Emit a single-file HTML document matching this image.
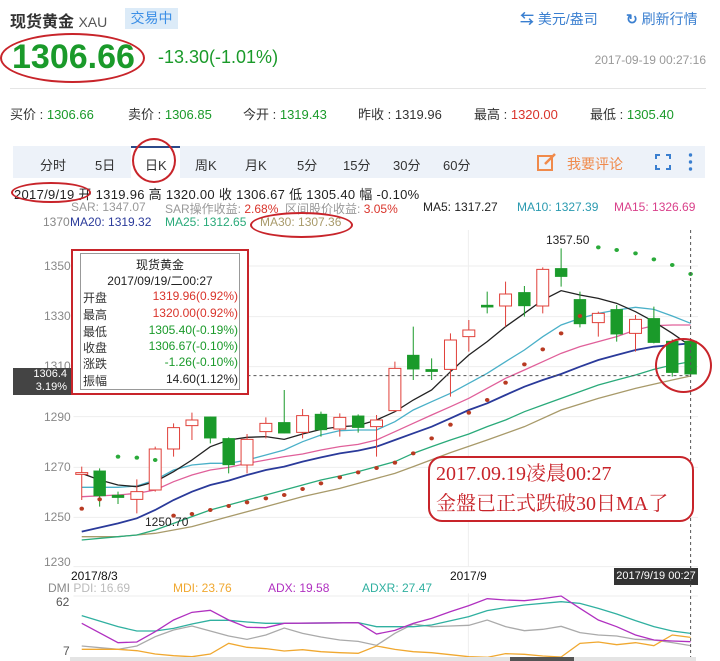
<!DOCTYPE html>
<html><head><meta charset="utf-8"><style>
*{margin:0;padding:0;box-sizing:border-box}
body{width:720px;height:661px;background:#fff;font-family:"Liberation Sans","Noto Sans CJK SC",sans-serif;position:relative;overflow:hidden;color:#333}
.a{position:absolute;white-space:nowrap}
.g{color:#1a9a2a}.r{color:#d9342b}
.tab{position:absolute;top:155px;font-size:13px;color:#333}
.ell{position:absolute;border:2px solid #c8242a;border-radius:50%}
.tt{position:absolute;left:83px;width:155px;font-size:12px}
.tt span{float:right}
</style></head><body>
<div class="a" style="left:10px;top:8px;font-size:16px;font-weight:bold;color:#333">现货黄金 <span style="font-weight:normal;color:#555;font-size:14px">XAU</span></div>
<div class="a" style="left:125px;top:8px;width:53px;height:21px;background:#dcebf8;color:#3a8ee6;font-size:14px;line-height:21px;text-align:center">交易中</div>
<div class="a" style="left:520px;top:9px;font-size:14px;color:#3a7fd0"><b>⇆</b> 美元/盎司</div>
<div class="a" style="left:626px;top:9px;font-size:14px;color:#3a7fd0"><b>↻</b> 刷新行情</div>
<div class="a" style="left:12px;top:38px;font-size:34px;font-weight:bold;color:#1a9a2a">1306.66</div>
<div class="ell" style="left:0;top:33px;width:145px;height:50px"></div>
<div class="a g" style="left:158px;top:47px;font-size:18px">-13.30(-1.01%)</div>
<div class="a" style="right:14px;top:53px;font-size:12px;color:#999">2017-09-19 00:27:16</div>
<div class="a" style="left:10px;top:88px;width:696px;height:1px;background:#e5e5e5"></div>
<div class="a" style="left:10px;top:104px;font-size:13px">买价 : <span class="g">1306.66</span></div>
<div class="a" style="left:128px;top:104px;font-size:13px">卖价 : <span class="g">1306.85</span></div>
<div class="a" style="left:243px;top:104px;font-size:13px">今开 : <span class="g">1319.43</span></div>
<div class="a" style="left:358px;top:104px;font-size:13px">昨收 : 1319.96</div>
<div class="a" style="left:474px;top:104px;font-size:13px">最高 : <span class="r">1320.00</span></div>
<div class="a" style="left:590px;top:104px;font-size:13px">最低 : <span class="g">1305.40</span></div>
<div class="a" style="left:13px;top:146px;width:692px;height:32px;background:#edf2f9"></div>
<div class="a" style="left:131px;top:146px;width:49px;height:32px;background:#fff;border-top:2px solid #2a4a8a"></div>
<div class="tab" style="left:40px">分时</div><div class="tab" style="left:95px">5日</div><div class="tab" style="left:145px">日K</div><div class="tab" style="left:195px">周K</div><div class="tab" style="left:245px">月K</div><div class="tab" style="left:297px">5分</div><div class="tab" style="left:343px">15分</div><div class="tab" style="left:393px">30分</div><div class="tab" style="left:443px">60分</div>
<div class="ell" style="left:132px;top:138px;width:44px;height:45px"></div>
<svg class="a" style="left:537px;top:153px" width="20" height="18"><rect x="1" y="3" width="14" height="14" fill="none" stroke="#f08a4b" stroke-width="2"/><path d="M8 11 L18 1" stroke="#f08a4b" stroke-width="2.5"/></svg>
<div class="a" style="left:567px;top:154px;font-size:14px;color:#f08a4b">我要评论</div>
<svg class="a" style="left:655px;top:154px" width="16" height="16" fill="none" stroke="#3a7fd0" stroke-width="2"><path d="M1 5V1H5M11 1H15V5M15 11V15H11M5 15H1V11"/></svg>
<svg class="a" style="left:688px;top:152px" width="5" height="20" fill="#3a7fd0"><circle cx="2.5" cy="3" r="1.7"/><circle cx="2.5" cy="10" r="1.7"/><circle cx="2.5" cy="17" r="1.7"/></svg>
<div class="a" style="left:14px;top:184px;font-size:13px;letter-spacing:0.3px;color:#222">2017/9/19 开 1319.96 高 1320.00 收 1306.67 低 1305.40 幅 -0.10%</div>
<div class="ell" style="left:11px;top:182px;width:80px;height:21px"></div>
<div class="a" style="left:71px;top:200px;font-size:12px;color:#999">SAR: 1347.07</div>
<div class="a" style="left:165px;top:200px;font-size:12px;color:#999">SAR操作收益: <span class="r">2.68%</span> &nbsp;区间股价收益: <span class="r">3.05%</span></div>
<div class="a" style="left:423px;top:200px;font-size:12px;color:#222">MA5: 1317.27</div>
<div class="a" style="left:517px;top:200px;font-size:12px;color:#2a9ab0">MA10: 1327.39</div>
<div class="a" style="left:614px;top:200px;font-size:12px;color:#d9408a">MA15: 1326.69</div>
<div class="a" style="left:43px;top:215px;font-size:12px;color:#888">1370</div>
<div class="a" style="left:70px;top:215px;font-size:12px;color:#2a3a9a">MA20: 1319.32</div>
<div class="a" style="left:165px;top:215px;font-size:12px;color:#2aaa7a">MA25: 1312.65</div>
<div class="a" style="left:260px;top:215px;font-size:12px;color:#a89a6a">MA30: 1307.36</div>
<div class="ell" style="left:250px;top:212px;width:103px;height:26px"></div>
<div class="a" style="left:44px;top:259px;font-size:12px;color:#888">1350</div>
<div class="a" style="left:44px;top:309px;font-size:12px;color:#888">1330</div>
<div class="a" style="left:44px;top:359px;font-size:12px;color:#888">1310</div>
<div class="a" style="left:44px;top:410px;font-size:12px;color:#888">1290</div>
<div class="a" style="left:44px;top:460px;font-size:12px;color:#888">1270</div>
<div class="a" style="left:44px;top:510px;font-size:12px;color:#888">1250</div>
<div class="a" style="left:44px;top:555px;font-size:12px;color:#888">1230</div>
<svg class="a" style="left:0;top:230px" width="720" height="340" viewBox="0 0 1568 1020" preserveAspectRatio="none">
<g stroke="#eee" vector-effect="non-scaling-stroke"><path d="M160 108H1520M160 260H1520M160 410H1520M160 560H1520M160 712H1520M160 862H1520M160 1010H1520M1020 0V1010" vector-effect="non-scaling-stroke"/></g>
<g fill="none" stroke-width="1.3">
<polyline vector-effect="non-scaling-stroke" stroke="#a89a6a" points="178,920 257,920 338,910 418,890 498,860 579,830 659,800 740,775 820,745 860,730 900,710 981,668 1061,630 1142,590 1222,540 1303,505 1384,475 1464,450 1504,438"/>
<polyline vector-effect="non-scaling-stroke" stroke="#2aaa7a" points="178,930 257,920 298,915 338,900 378,880 418,860 458,840 498,825 538,810 579,795 619,780 659,765 699,750 740,738 780,725 820,710 860,695 900,670 940,650 981,630 1021,612 1061,590 1101,570 1142,545 1182,525 1222,505 1263,485 1303,465 1343,450 1384,435 1424,418 1464,405 1504,395"/>
<polyline vector-effect="non-scaling-stroke" stroke="#2a3a9a" stroke-width="1.8" points="178,905 257,880 298,865 338,840 378,810 418,785 458,765 498,752 538,735 579,720 619,710 659,695 699,682 740,670 780,662 820,650 860,630 900,610 940,590 981,565 1021,540 1061,520 1101,495 1142,470 1182,450 1222,432 1263,410 1303,390 1343,375 1384,360 1424,350 1464,345 1504,340"/>
<polyline vector-effect="non-scaling-stroke" stroke="#e0609a" points="178,800 257,795 298,790 338,780 378,755 418,735 458,720 498,712 538,700 579,690 619,680 659,672 699,660 740,650 780,643 820,630 860,605 900,580 940,555 981,530 1021,505 1061,475 1101,445 1142,420 1182,395 1222,370 1263,350 1303,335 1343,320 1384,300 1424,287 1464,285 1504,285"/>
<polyline vector-effect="non-scaling-stroke" stroke="#4ab0c8" points="178,772 257,772 298,768 338,750 378,720 418,705 458,700 498,700 538,690 579,675 619,660 659,635 699,615 740,602 780,600 820,600 860,575 900,540 940,515 981,490 1021,460 1061,430 1101,395 1142,360 1182,320 1222,285 1263,265 1303,250 1343,240 1384,232 1424,238 1464,258 1504,280"/>
<polyline vector-effect="non-scaling-stroke" stroke="#222" points="178,730 217,750 257,765 298,770 338,755 378,725 418,690 458,650 498,630 538,622 579,620 619,628 659,612 699,598 740,590 780,587 820,570 860,545 900,510 940,480 981,425 1021,375 1061,335 1101,290 1142,250 1182,210 1222,182 1263,195 1303,205 1343,220 1384,245 1424,275 1464,310 1504,348"/>
</g>
<g stroke="#e0403a" fill="#fff" vector-effect="non-scaling-stroke">
<path vector-effect="non-scaling-stroke" fill="none" d="M178 710V810M298 748V850M338 650V785M378 580V680M418 548V630M538 612V730M579 562V625M659 537V625M740 550V620M820 555V680M860 395V545M981 310V500M1021 270V365M1101 155V290M1182 112V250M1303 245V320M1384 255V365"/>
<rect vector-effect="non-scaling-stroke" x="165" y="728" width="26" height="5"/>
<rect vector-effect="non-scaling-stroke" x="285" y="785" width="26" height="23"/>
<rect vector-effect="non-scaling-stroke" x="325" y="657" width="26" height="123"/>
<rect vector-effect="non-scaling-stroke" x="365" y="593" width="26" height="64"/>
<rect vector-effect="non-scaling-stroke" x="405" y="570" width="26" height="17"/>
<rect vector-effect="non-scaling-stroke" x="525" y="628" width="26" height="77"/>
<rect vector-effect="non-scaling-stroke" x="566" y="580" width="26" height="25"/>
<rect vector-effect="non-scaling-stroke" x="646" y="557" width="26" height="50"/>
<rect vector-effect="non-scaling-stroke" x="727" y="562" width="26" height="35"/>
<rect vector-effect="non-scaling-stroke" x="807" y="570" width="26" height="20"/>
<rect vector-effect="non-scaling-stroke" x="847" y="415" width="26" height="127"/>
<rect vector-effect="non-scaling-stroke" x="968" y="330" width="26" height="88"/>
<rect vector-effect="non-scaling-stroke" x="1008" y="300" width="26" height="20"/>
<rect vector-effect="non-scaling-stroke" x="1088" y="192" width="26" height="36"/>
<rect vector-effect="non-scaling-stroke" x="1169" y="118" width="26" height="110"/>
<rect vector-effect="non-scaling-stroke" x="1290" y="250" width="26" height="28"/>
<rect vector-effect="non-scaling-stroke" x="1371" y="268" width="26" height="42"/>
</g>
<g stroke="#1a9a2a" fill="#1a9a2a">
<path vector-effect="non-scaling-stroke" fill="none" d="M217 715V830M257 785V822M458 560V640M498 622V730M619 480V610M699 545V620M780 553V608M900 290V450M940 385V450M1061 185V250M1142 168V260M1222 55V170M1263 185V292M1343 225V335M1424 230V340M1464 328V440M1504 328V440"/>
<rect x="204" y="722" width="26" height="76"/><rect x="244" y="795" width="26" height="8"/><rect x="445" y="560" width="26" height="65"/><rect x="485" y="625" width="26" height="80"/><rect x="606" y="577" width="26" height="33"/><rect x="686" y="552" width="26" height="48"/><rect x="767" y="557" width="26" height="36"/><rect x="887" y="375" width="26" height="43"/><rect x="927" y="418" width="26" height="7"/><rect x="1048" y="225" width="26" height="7"/><rect x="1129" y="187" width="26" height="41"/><rect x="1209" y="115" width="26" height="25"/><rect x="1250" y="208" width="26" height="74"/><rect x="1330" y="238" width="26" height="75"/><rect x="1411" y="265" width="26" height="73"/><rect x="1451" y="333" width="26" height="95"/><rect x="1491" y="333" width="26" height="100"/>
</g>
<g fill="#2aaa3a"><ellipse cx="257" cy="680" rx="5" ry="6"/><ellipse cx="298" cy="683" rx="5" ry="6"/><ellipse cx="338" cy="690" rx="5" ry="6"/><ellipse cx="1303" cy="52" rx="5" ry="6"/><ellipse cx="1343" cy="60" rx="5" ry="6"/><ellipse cx="1384" cy="70" rx="5" ry="6"/><ellipse cx="1424" cy="88" rx="5" ry="6"/><ellipse cx="1464" cy="105" rx="5" ry="6"/><ellipse cx="1504" cy="132" rx="5" ry="6"/></g>
<g fill="#b83a22"><ellipse cx="178" cy="836" rx="5" ry="6"/><ellipse cx="217" cy="808" rx="5" ry="6"/><ellipse cx="378" cy="857" rx="5" ry="6"/><ellipse cx="418" cy="852" rx="5" ry="6"/><ellipse cx="458" cy="840" rx="5" ry="6"/><ellipse cx="498" cy="828" rx="5" ry="6"/><ellipse cx="538" cy="817" rx="5" ry="6"/><ellipse cx="579" cy="805" rx="5" ry="6"/><ellipse cx="619" cy="795" rx="5" ry="6"/><ellipse cx="659" cy="777" rx="5" ry="6"/><ellipse cx="699" cy="760" rx="5" ry="6"/><ellipse cx="740" cy="742" rx="5" ry="6"/><ellipse cx="780" cy="727" rx="5" ry="6"/><ellipse cx="820" cy="714" rx="5" ry="6"/><ellipse cx="860" cy="698" rx="5" ry="6"/><ellipse cx="900" cy="670" rx="5" ry="6"/><ellipse cx="940" cy="625" rx="5" ry="6"/><ellipse cx="981" cy="584" rx="5" ry="6"/><ellipse cx="1021" cy="548" rx="5" ry="6"/><ellipse cx="1061" cy="510" rx="5" ry="6"/><ellipse cx="1101" cy="458" rx="5" ry="6"/><ellipse cx="1142" cy="403" rx="5" ry="6"/><ellipse cx="1182" cy="358" rx="5" ry="6"/><ellipse cx="1222" cy="310" rx="5" ry="6"/><ellipse cx="1263" cy="258" rx="5" ry="6"/></g>
<path vector-effect="non-scaling-stroke" d="M160 437H1504M1504 0V1020" stroke="#555" stroke-dasharray="3 3" fill="none"/>
</svg>
<div class="a" style="left:546px;top:233px;font-size:12px;color:#222">1357.50</div>
<div class="a" style="left:145px;top:515px;font-size:12px;color:#222">1250.70</div>
<div class="a" style="left:13px;top:368px;width:58px;height:27px;background:#444;color:#fff;font-size:11px;line-height:13px;text-align:right;padding-right:4px">1306.4<br>3.19%</div>
<div class="a" style="left:71px;top:249px;width:178px;height:146px;border:2px solid #c8242a;background:#fff"></div>
<div class="a" style="left:80px;top:253px;width:160px;height:137px;border:1px solid #999"></div>
<div class="a" style="left:80px;top:257px;width:160px;text-align:center;font-size:12px;line-height:16px;color:#222">现货黄金<br>2017/09/19/二00:27</div>
<div class="tt" style="top:289px">开盘<span class="r">1319.96(0.92%)</span></div>
<div class="tt" style="top:306px">最高<span class="r">1320.00(0.92%)</span></div>
<div class="tt" style="top:323px">最低<span class="g">1305.40(-0.19%)</span></div>
<div class="tt" style="top:339px">收盘<span class="g">1306.67(-0.10%)</span></div>
<div class="tt" style="top:355px">涨跌<span class="g">-1.26(-0.10%)</span></div>
<div class="tt" style="top:372px">振幅<span style="color:#222">14.60(1.12%)</span></div>
<div class="a" style="left:428px;top:456px;width:266px;height:66px;border:2px solid #c8242a;border-radius:14px;background:#fff"></div>
<div class="a" style="left:436px;top:459px;font-family:'Liberation Serif','Noto Serif CJK SC',serif;font-size:20px;line-height:30px;color:#c8242a">2017.09.19凌晨00:27<br>金盤已正式跌破30日MA了</div>
<div class="ell" style="left:655px;top:338px;width:57px;height:55px"></div>
<div class="a" style="left:71px;top:569px;font-size:12px;color:#111">2017/8/3</div>
<div class="a" style="left:450px;top:569px;font-size:12px;color:#111">2017/9</div>
<div class="a" style="left:614px;top:568px;width:84px;height:17px;background:#333;color:#fff;font-size:11px;line-height:17px;text-align:center">2017/9/19 00:27</div>
<div class="a" style="left:48px;top:581px;font-size:12px;color:#888">DMI <span style="color:#bbb">PDI: 16.69</span></div>
<div class="a" style="left:173px;top:581px;font-size:12px;color:#f0a830">MDI: 23.76</div>
<div class="a" style="left:268px;top:581px;font-size:12px;color:#b030c0">ADX: 19.58</div>
<div class="a" style="left:362px;top:581px;font-size:12px;color:#30b0a0">ADXR: 27.47</div>
<div class="a" style="left:56px;top:595px;font-size:12px;color:#555">62</div>
<div class="a" style="left:63px;top:644px;font-size:12px;color:#555">7</div>
<svg class="a" style="left:0;top:560px" width="720" height="101" viewBox="0 0 1568 303" preserveAspectRatio="none">
<path vector-effect="non-scaling-stroke" d="M160 108H1520M1020 100V290" stroke="#eee" fill="none"/>
<g fill="none" stroke-width="1.3">
<polyline vector-effect="non-scaling-stroke" stroke="#aaa" points="178,258 257,268 298,258 338,230 378,210 418,198 458,213 498,228 538,238 579,225 619,204 659,220 699,231 740,240 780,244 820,256 860,220 900,192 940,200 981,198 1021,196 1061,180 1101,200 1142,212 1182,208 1222,199 1263,218 1303,225 1343,228 1384,238 1424,240 1464,248 1504,257"/>
<polyline vector-effect="non-scaling-stroke" stroke="#f0a830" points="178,268 257,268 298,272 338,282 378,287 418,290 458,282 498,250 538,262 579,266 619,273 659,269 699,275 740,278 780,280 820,258 860,268 900,275 940,278 981,284 1021,290 1061,292 1101,281 1142,283 1182,288 1222,291 1263,250 1303,246 1343,254 1384,248 1424,257 1464,225 1504,232"/>
<polyline vector-effect="non-scaling-stroke" stroke="#30b0a0" points="178,167 257,200 298,213 338,213 378,205 418,192 458,181 498,181 538,186 579,190 619,190 780,188 820,200 900,200 940,195 1021,170 1061,152 1101,143 1142,135 1222,125 1263,130 1303,145 1343,162 1384,182 1424,200 1464,213 1504,220"/>
<polyline vector-effect="non-scaling-stroke" stroke="#b030c0" points="178,190 257,248 298,246 338,215 378,180 418,157 458,151 498,180 538,202 579,203 619,190 780,188 820,222 860,211 900,190 940,175 981,155 1021,137 1061,116 1101,120 1142,122 1182,116 1222,108 1263,145 1303,180 1343,200 1384,225 1424,240 1464,243 1504,245"/>
</g>
<path vector-effect="non-scaling-stroke" d="M1504 0V303" stroke="#555" stroke-dasharray="3 3"/>
</svg>
<div class="a" style="left:70px;top:657px;width:626px;height:4px;background:#e4e4e4"></div>
<div class="a" style="left:510px;top:657px;width:64px;height:4px;background:#555"></div>
</body></html>
